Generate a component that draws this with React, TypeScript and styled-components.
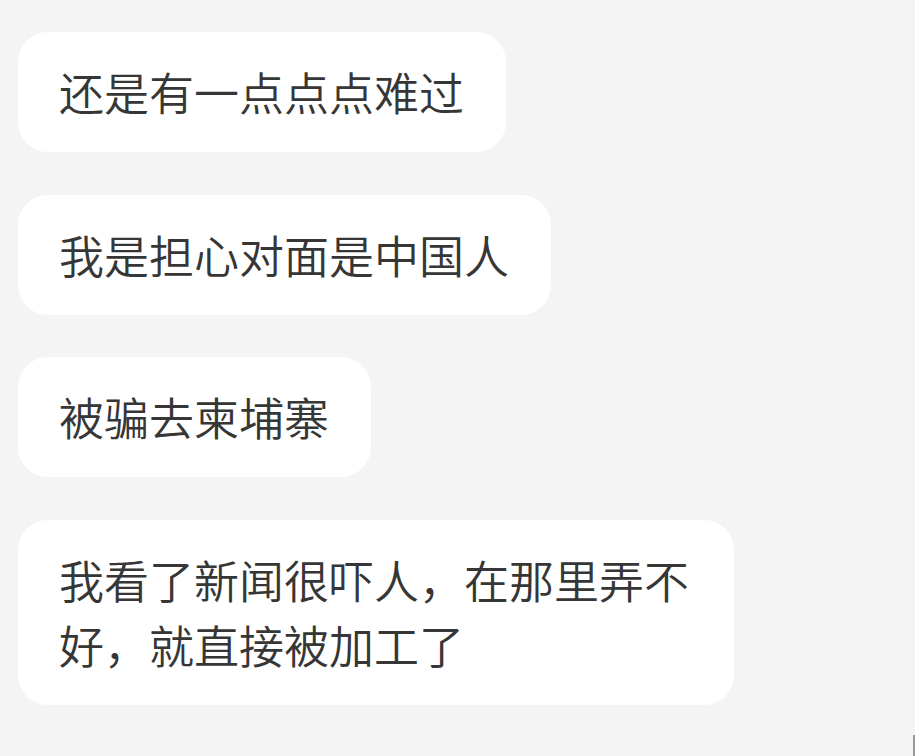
import React from "react";
import styled, { createGlobalStyle } from "styled-components";

const messages: string[] = [
  "还是有一点点点难过",
  "我是担心对面是中国人",
  "被骗去柬埔寨",
  "我看了新闻很吓人，在那里弄不好，就直接被加工了",
];

export default function App() {
  return (
    <>
      <GlobalStyle />
      <ChatList>
        {messages.map((text, i) => (
          <Row key={i}>
            <Bubble>{text}</Bubble>
          </Row>
        ))}
      </ChatList>
      <ScrollThumb />
    </>
  );
}

const GlobalStyle = createGlobalStyle`
  html, body {
    margin: 0;
    padding: 0;
    background: #f4f4f4;
  }
  body {
    width: 915px;
    height: 756px;
    overflow: hidden;
    font-family: "Noto Sans CJK SC", "Noto Sans", sans-serif;
  }
`;

const ChatList = styled.div`
  display: flex;
  flex-direction: column;
  gap: 42.5px;
  padding: 32px 0 0 18px;
`;

const Row = styled.div`
  display: flex;
  justify-content: flex-start;
`;

const Bubble = styled.div`
  box-sizing: border-box;
  max-width: 716px;
  padding: 27px 42px 28px 41px;
  background: #ffffff;
  border-radius: 30px;
  color: #363636;
  font-size: 45px;
  font-weight: 350;
  line-height: 65px;
  word-break: break-all;
`;

const ScrollThumb = styled.div`
  position: fixed;
  right: 0;
  bottom: 0;
  width: 2px;
  height: 21px;
  background: #9a9a9a;
`;
